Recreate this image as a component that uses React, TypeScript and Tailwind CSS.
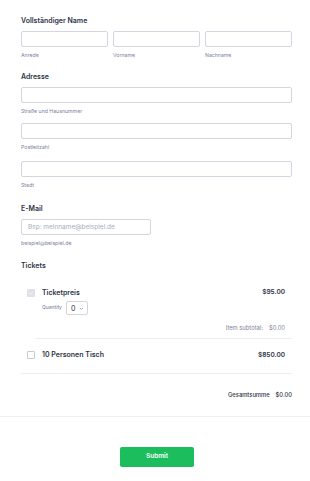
import React from "react";

const font = { fontFamily: "Inter, 'Liberation Sans', sans-serif" };

function Input({ w = "w-full", placeholder }: { w?: string; placeholder?: string }) {
  return (
    <div className={`${w} h-[16px] rounded-[2px] border border-[#d3d6de] bg-white flex items-center px-[6px]`}>
      {placeholder && <span className="text-[6.5px] text-[#a6adbc] leading-none">{placeholder}</span>}
    </div>
  );
}

function Sub({ children }: { children: React.ReactNode }) {
  return <div className="text-[5.2px] text-[#7d81a0] leading-none mt-[6px]">{children}</div>;
}

function Label({ children }: { children: React.ReactNode }) {
  return <div className="text-[7px] font-semibold text-[#2c3345] leading-none mb-[7px]">{children}</div>;
}

export default function App() {
  return (
    <div className="w-[310px] h-[481px] bg-white overflow-hidden" style={font}>
      <div className="pl-[21px] pr-[18px] pt-[17px]">
        <Label>Vollständiger Name</Label>
        <div className="flex gap-[5px]">
          <div className="flex-1">
            <Input />
            <Sub>Anrede</Sub>
          </div>
          <div className="flex-1">
            <Input />
            <Sub>Vorname</Sub>
          </div>
          <div className="flex-1">
            <Input />
            <Sub>Nachname</Sub>
          </div>
        </div>

        <div className="mt-[15px]">
          <Label>Adresse</Label>
          <Input />
          <Sub>Straße und Hausnummer</Sub>
          <div className="mt-[9px]">
            <Input />
            <Sub>Postleitzahl</Sub>
          </div>
          <div className="mt-[10px]">
            <Input />
            <Sub>Stadt</Sub>
          </div>
        </div>

        <div className="mt-[17px]">
          <Label>E-Mail</Label>
          <Input w="w-[130px]" placeholder="Bsp: meinname@beispiel.de" />
          <Sub>beispiel@beispiel.de</Sub>
        </div>

        <div className="mt-[16px]">
          <Label>Tickets</Label>
          <div className="pl-[6px] pt-[13px]">
            <div className="pr-[7px]">
              <div className="flex items-start">
                <div className="w-[8px] h-[8px] bg-[#dfe1e6] rounded-[1px] flex items-center justify-center">
                  <svg viewBox="0 0 10 10" width="6" height="6">
                    <path d="M2 5.2 L4.2 7.2 L8 3" fill="none" stroke="#f2f3f5" strokeWidth="1.4" />
                  </svg>
                </div>
                <div className="ml-[7px] flex-1">
                  <div className="flex justify-between items-center">
                    <span className="text-[7px] font-semibold text-[#2c3345] leading-none">Ticketpreis</span>
                    <span className="text-[6.5px] font-semibold text-[#2c3345] leading-none">$95.00</span>
                  </div>
                  <div className="flex items-center mt-[5px]">
                    <span className="text-[5px] text-[#6f76a7] mr-[4px]">Quantity</span>
                    <div className="w-[22px] h-[14px] border border-[#d3d6de] rounded-[2px] flex items-center pl-[4px] gap-[4px]">
                      <span className="text-[7px] text-[#2c3345] leading-none">0</span>
                      <svg viewBox="0 0 8 8" width="5" height="5">
                        <path d="M1.5 3 L4 5.5 L6.5 3" fill="none" stroke="#6f76a7" strokeWidth="1" />
                      </svg>
                    </div>
                  </div>
                </div>
              </div>
              <div className="flex justify-end gap-[6px] mt-[10px] text-[5.8px] text-[#7d81a0] leading-none">
                <span>Item subtotal:</span>
                <span>$0.00</span>
              </div>
            </div>
            <div className="h-px bg-[#edeef2] mt-[7px] ml-[8px]" />
            <div className="flex items-center mt-[12px] pr-[7px]">
              <div className="w-[8px] h-[8px] border border-[#c3cad8] rounded-[1px] bg-white" />
              <div className="ml-[7px] flex-1 flex justify-between items-center">
                <span className="text-[7px] font-semibold text-[#2c3345] leading-none">10 Personen Tisch</span>
                <span className="text-[6.5px] font-semibold text-[#2c3345] leading-none">$850.00</span>
              </div>
            </div>
          </div>
          <div className="h-px bg-[#edeef2] mt-[14px]" />
          <div className="flex justify-end gap-[6px] mt-[18px] text-[5.8px] font-medium text-[#2c3345] leading-none">
            <span>Gesamtsumme</span>
            <span>$0.00</span>
          </div>
        </div>
      </div>
      <div className="h-px bg-[#edeef2] mt-[18px]" />
      <div className="flex justify-center mt-[30px] pl-[4px]">
        <div className="w-[74px] h-[20px] rounded-[2px] bg-[#1bbd5d] flex items-center justify-center text-[6.5px] font-semibold text-white">
          Submit
        </div>
      </div>
    </div>
  );
}
